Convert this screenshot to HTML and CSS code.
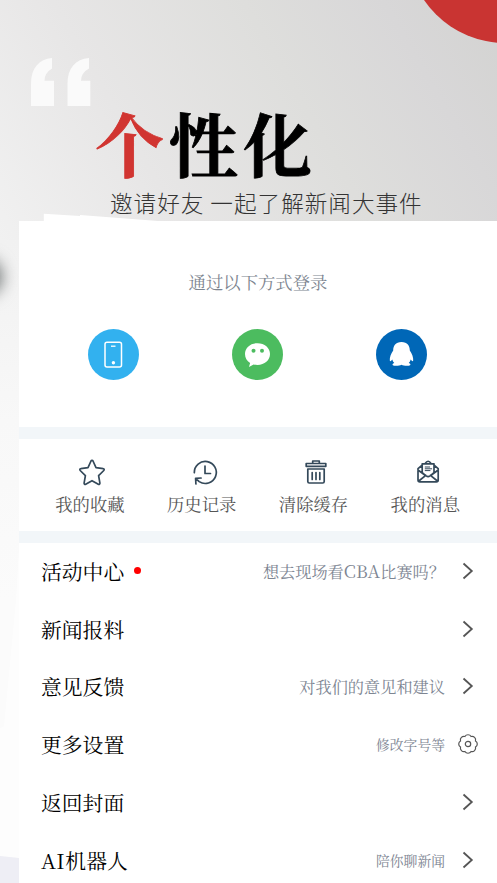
FILE: index.html
```html
<!DOCTYPE html>
<html lang="zh-CN">
<head>
<meta charset="utf-8">
<title>个性化</title>
<link rel="stylesheet" href="styles.css">
</head>
<body>
<div class="page">
  <svg class="decor" viewBox="0 0 497 883" aria-hidden="true">
    <circle cx="505" cy="-54.8" r="97.8" fill="#c93432"/>
    <path d="M43.8 223V213.8L80 216V215L158 221V223Z" fill="#fff"/>
    <path d="M19 548L16 600 4 726 0 728V856L19 858Z" fill="#fff" opacity=".6"/>
    <path d="M0 856L19 858V883H0Z" fill="#eeeef5"/>
    <path d="M31 106V84C31 68 39 59 52 58V68.500Q44.500 73 44.500 80.700H54V106ZM67.500 106V84C67.500 68 75.500 59 89 58V68.500Q81 73 81 80.700H90.300V106Z" fill="#fafafa"/>
  </svg>
  <div class="shadow"></div>
  <header class="hero">
    <h1 class="title"><span class="accent">个</span>性化</h1>
    <p class="subtitle">邀请好友 一起了解新闻大事件</p>
  </header>
  <main class="panel">
    <section class="login">
      <p class="login-text">通过以下方式登录</p>
      <div class="login-icons">
        <svg class="social" viewBox="0 0 51 51"><circle cx="25.500" cy="25.500" r="25.500" fill="#32b1ef"/><rect x="17" y="13.300" width="16.500" height="24.700" rx="2" fill="none" stroke="#fff" stroke-width="1.500"/><path d="M23 17.200h4.500" stroke="#fff" stroke-width="1.300"/><circle cx="25.400" cy="33.700" r="1.700" fill="#fff"/></svg>
        <svg class="social" viewBox="0 0 51 51"><circle cx="25.500" cy="25.500" r="25.500" fill="#4cbc5f"/><path d="M25.500 14.200C18.400 14.200 13 18.800 13 25.100c0 3.800 1.900 6.900 5.100 8.900L17 37.900l4.600-2.400c1.300.4 2.600.5 3.900.5C32.600 36 38 31.400 38 25.100s-5.400-10.900-12.500-10.900Z" fill="#fff"/><circle cx="21.500" cy="21.800" r="2" fill="#4cbc5f"/><circle cx="30" cy="21.800" r="2" fill="#4cbc5f"/></svg>
        <svg class="social" viewBox="0 0 51 51"><circle cx="25.500" cy="25.500" r="25.500" fill="#0067b7"/><path d="M25.500 13C19.600 13 17.200 16.800 17.200 21.600C15 24.700 13.500 28.700 13.800 31.600C14.200 33 15.600 31.700 16.300 30.600C16.600 32 17.300 33.200 18.300 34.100C16 34.700 15.900 36.500 18.300 36.700C21 37 24 36.600 25.500 35.700C27 36.600 30 37 32.700 36.700C35.100 36.500 35 34.700 32.700 34.100C33.700 33.200 34.400 32 34.700 30.600C35.400 31.700 36.800 33 37.200 31.600C37.500 28.700 36 24.700 33.800 21.600C33.800 16.800 31.400 13 25.500 13Z" fill="#fff"/></svg>
      </div>
    </section>
    <section class="tools">
      <div class="tool"><svg class="tool-icon" viewBox="0 0 28 28"><path d="M14 2.300c.5 0 .8.300 1 .7l3 6.600 7.200 1c1 .1 1.300 1.200.6 1.900l-5.200 5.100 1.300 7.500c.1 1-.8 1.600-1.600 1.200L14 22.700l-6.300 3.600c-.8.4-1.700-.2-1.600-1.200l1.300-7.500-5.200-5.100c-.7-.7-.4-1.800.6-1.900l7.200-1L13 3c.2-.4.500-.7 1-.7Z"/></svg><span>我的收藏</span></div>
      <div class="tool"><svg class="tool-icon wide" viewBox="0 0 28 28"><path d="M3.300 14.700A11 11 0 1 1 8.200 23.600L4.600 20.300M4.900 26L4.600 20.300l5.500-.3M14 8v7.500h5.500"/></svg><span>历史记录</span></div>
      <div class="tool"><svg class="tool-icon wide" viewBox="0 0 28 28"><path d="M5.800 11h16.400v12.500q0 1.500-1.500 1.500H7.300q-1.500 0-1.500-1.500ZM4.200 5.500h19.600v2.800H4.200ZM10.700 5.500V3h6.600v2.500M10.200 14.500v7M14 14.500v7M17.800 14.500v7"/></svg><span>清除缓存</span></div>
      <div class="tool"><svg class="tool-icon wide" viewBox="0 0 28 28"><path d="M7.800 7.500L4 10.700V22q0 1.800 1.800 1.800h16.600q1.800 0 1.800-1.800V10.700l-3.800-3.200M4 12l7.800 5.700M24.200 12l-7.800 5.700M4.800 23l7-5.700M23.400 23l-7-5.700M8.200 14.700V5.800h11.800v8.900M11 5.700Q14.100.800 17.200 5.700M8.200 14.700Q12.300 18.600 14.100 18.600T20 14.700"/><path d="M11.200 9h4.500M11.200 10.800h6.500M11.200 12.600h4.800" stroke-width="1"/></svg><span>我的消息</span></div>
    </section>
    <nav class="menu">
      <div class="row"><span class="name">活动中心</span><i class="dot"></i><span class="hint">想去现场看<span class="latin">CBA</span>比赛吗？</span><svg class="arrow" viewBox="0 0 20 20"><path d="M5.500 2.500L13.800 10l-8.300 7.500"/></svg></div>
      <div class="row"><span class="name">新闻报料</span><span class="hint"></span><svg class="arrow" viewBox="0 0 20 20"><path d="M5.500 2.500L13.800 10l-8.300 7.500"/></svg></div>
      <div class="row"><span class="name">意见反馈</span><span class="hint">对我们的意见和建议</span><svg class="arrow" viewBox="0 0 20 20"><path d="M5.500 2.500L13.800 10l-8.300 7.500"/></svg></div>
      <div class="row"><span class="name">更多设置</span><span class="hint small">修改字号等</span><svg class="arrow gear" viewBox="0 0 20 20"><path d="M6.900 2.500A3.600 3.600 0 0 1 13.100 2.500A3.600 3.600 0 0 1 17.500 6.900A3.600 3.600 0 0 1 17.500 13.100A3.600 3.600 0 0 1 13.100 17.500A3.600 3.600 0 0 1 6.900 17.500A3.600 3.600 0 0 1 2.500 13.100A3.600 3.600 0 0 1 2.500 6.900A3.600 3.600 0 0 1 6.900 2.500Z"/><circle cx="10" cy="10" r="2.700"/></svg></div>
      <div class="row"><span class="name">返回封面</span><span class="hint"></span><svg class="arrow" viewBox="0 0 20 20"><path d="M5.500 2.500L13.800 10l-8.300 7.500"/></svg></div>
      <div class="row"><span class="name"><span class="latin-name">AI</span>机器人</span><span class="hint small">陪你聊新闻</span><svg class="arrow" viewBox="0 0 20 20"><path d="M5.500 2.500L13.800 10l-8.300 7.500"/></svg></div>
    </nav>
  </main>
</div>
</body>
</html>
```
FILE: styles.css
```css
* { box-sizing: border-box; margin: 0; padding: 0; }
body {
  font-family: "Noto Serif CJK SC", "Noto Serif SC", "Liberation Serif", "Noto Sans CJK SC", serif;
  overflow: hidden;
}
.page {
  position: relative;
  width: 497px;
  height: 883px;
  overflow: hidden;
  background:
    linear-gradient(60deg, #f1f1f1 0%, #e7e6e6 30%, #dededc 60%, #d8d7d8 82%, #d3d3d1 100%) 0 0 / 497px 240px no-repeat,
    linear-gradient(180deg, #f1f1f1 240px, #f8f8f8 420px, #fbfbfb 600px);
}
.decor { position: absolute; left: 0; top: 0; width: 497px; height: 883px; }
.shadow {
  position: absolute;
  left: -31px;
  top: 259px;
  width: 33px;
  height: 36px;
  border-radius: 50%;
  background: #6f7474;
  filter: blur(8px);
}
.hero { position: relative; height: 221px; padding: 103px 0 0 95px; }
.title {
  font-size: 69px;
  line-height: 80px;
  font-weight: 700;
  letter-spacing: 5px;
  color: #000;
  -webkit-text-stroke: .8px currentColor;
}
.accent { color: #d13531; }
.subtitle {
  margin: 5px 0 0 15px;
  font: 300 22.6px/30px "Noto Sans CJK SC", sans-serif;
  letter-spacing: 1px;
  white-space: nowrap;
  color: #333;
}
.panel {
  position: relative;
  display: flex;
  flex-direction: column;
  gap: 12px;
  height: 662px;
  margin-left: 19px;
  background: #f2f6f9;
}
.login { flex: none; height: 206px; padding-top: 48px; background: #fff; }
.login-text { text-align: center; font-size: 17.350px; line-height: 26px; color: #7d8590; }
.login-icons { display: flex; justify-content: space-between; padding: 34px 70px 0 69px; }
.social { width: 51px; height: 51px; }
.tools {
  flex: none;
  display: grid;
  grid-template-columns: repeat(4, 111.800px);
  height: 92px;
  padding: 19px 0 0 15px;
  background: #fff;
}
.tool {
  display: flex;
  flex-direction: column;
  align-items: center;
  gap: 5px;
  font-size: 17.350px;
  line-height: 26px;
  color: #555;
}
.tool-icon {
  width: 28px;
  height: 28px;
  margin-left: 4px;
  fill: none;
  stroke: #34495a;
  stroke-width: 1.700;
  stroke-linejoin: round;
  stroke-linecap: round;
}
.tool-icon.wide { margin-left: 6px; }
.menu { flex: 1; min-height: 0; background: #fff; }
.row { display: flex; align-items: center; height: 57.750px; padding: 0 19px 2px 22px; }
.name { font-size: 20.800px; line-height: 30px; color: #000; }
.dot { width: 7px; height: 7px; margin-left: 10px; border-radius: 50%; background: #f00; }
.hint { flex: 1; margin-right: 13px; text-align: right; font-size: 16.200px; color: #7d8592; white-space: nowrap; }
.hint.small { font-size: 13.800px; }
.latin { font-size: 17.500px; line-height: 1; letter-spacing: .2px; }
.latin-name { letter-spacing: .6px; }
.arrow { width: 20px; height: 20px; fill: none; stroke: #555; stroke-width: 1.800; }
.gear { stroke-width: 1.200; }
```
